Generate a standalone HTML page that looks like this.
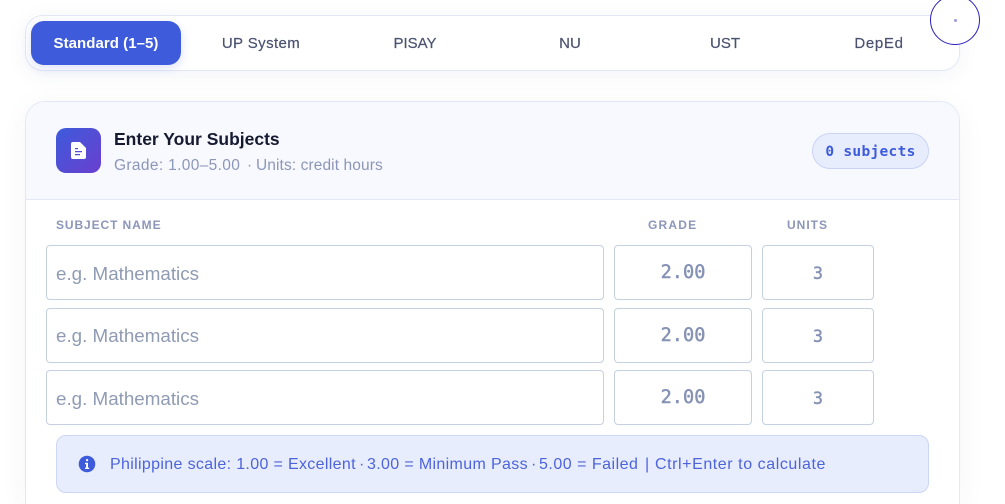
<!DOCTYPE html>
<html><head><meta charset="utf-8"><style>
html,body{margin:0;padding:0;background:#fff;width:1005px;height:504px;overflow:hidden;font-family:"Liberation Sans",sans-serif}
#root{position:relative;width:1005px;height:504px;overflow:hidden;background:#fff}
#clip{position:absolute;left:0;top:0;width:980px;height:504px;overflow:hidden}
.a{position:absolute;white-space:nowrap}
#bar{left:25px;top:15px;width:933px;height:54px;border:1px solid #e4e8f6;border-radius:18px;background:#fff;box-shadow:0 4px 22px rgba(50,60,120,.06)}
#card{left:25px;top:101px;width:933px;height:403px;box-sizing:border-box;width:935px;border:1px solid #e4e8f6;border-bottom:0;border-radius:20px 20px 0 0;background:#fff;box-shadow:0 6px 28px rgba(50,60,120,.05);overflow:hidden}
#act{left:31px;top:21px;width:150px;height:44px;border-radius:13px;background:#3d5bdb;box-shadow:0 3px 10px rgba(61,91,219,.18)}
.t{top:35px;height:18px;line-height:18px;font-size:15px;color:#4a5270;text-align:center;width:150px;-webkit-text-stroke:.2px #4a5270}
#head{left:0;top:0;width:933px;height:97px;background:#f8f9fe;border-bottom:1px solid #e4e8f6}
.lab{top:218px;height:15px;line-height:15px;font-size:12px;font-weight:bold;color:#8c96b8}
.inp{box-sizing:border-box;height:55px;border:1px solid #c5d0e0;border-radius:4px;background:#fff}
.name{left:46px;width:558px;font-size:18.8px;line-height:55px;color:#8f9bb3;padding-left:9px}
.gr{left:614px;width:138px;text-align:center;font-family:"DejaVu Sans Mono","Liberation Mono",monospace;font-size:18.6px;line-height:53px;color:#8592b4;-webkit-text-stroke:.45px #8592b4}
.un{left:762px;width:112px;text-align:center;font-family:"DejaVu Sans Mono","Liberation Mono",monospace;font-size:16.5px;line-height:55px;color:#8592b4;-webkit-text-stroke:.45px #8592b4}
.i{top:456px;height:18px;line-height:18px;font-size:16px;color:#4d63dc}
</style></head><body><div id="root">
<div id="clip">
<div class="a" id="bar"></div>
<div class="a" id="card"><div class="a" id="head"></div></div>
</div>
<div class="a" id="act"></div>
<div class="a t" style="left:31px;color:#fff;font-weight:bold;-webkit-text-stroke:0;letter-spacing:.05px">Standard (1–5)</div>
<div class="a t" style="left:186px;letter-spacing:.4px">UP System</div>
<div class="a t" style="left:340px">PISAY</div>
<div class="a t" style="left:495px">NU</div>
<div class="a t" style="left:650px">UST</div>
<div class="a t" style="left:804px;letter-spacing:.7px">DepEd</div>

<div class="a" style="left:56px;top:128px;width:45px;height:45px;border-radius:10px;background:linear-gradient(135deg,#3d5bdb,#6a3fcf)"></div>
<svg class="a" style="left:71px;top:142px" width="15" height="17" viewBox="0 0 15 17"><path fill="#fff" fill-rule="evenodd" d="M2 0H9L15 6V15A2 2 0 0 1 13 17H2A2 2 0 0 1 0 15V2A2 2 0 0 1 2 0ZM4 6V7.3H7V6ZM4 9V10.3H11V9ZM4 12V13.3H9V12Z"/></svg>
<div class="a" style="left:114px;top:129px;height:21px;line-height:21px;font-size:17.5px;font-weight:bold;color:#161a30">Enter Your Subjects</div>
<div class="a" style="left:114px;top:157px;height:18px;line-height:18px;font-size:15.5px;letter-spacing:.35px;color:#8c96b8">Grade: 1.00–5.00</div>
<div class="a" style="left:247px;top:157px;height:18px;line-height:18px;font-size:15.5px;color:#8c96b8">·</div>
<div class="a" style="left:256px;top:157px;height:18px;line-height:18px;font-size:15.5px;letter-spacing:.1px;color:#8c96b8">Units: credit hours</div>
<div class="a" style="left:812px;top:133px;width:115px;height:34px;border:1px solid #c9d3f5;border-radius:18px;background:#e8edfd;text-align:center;line-height:36px;font-family:'DejaVu Sans Mono','Liberation Mono',monospace;font-weight:bold;font-size:14.5px;letter-spacing:.3px;color:#3d5bdb">0 subjects</div>

<div class="a lab" style="left:56px;letter-spacing:.9px">SUBJECT NAME</div>
<div class="a lab" style="left:648px;letter-spacing:1.2px">GRADE</div>
<div class="a lab" style="left:787px;letter-spacing:1px">UNITS</div>

<div class="a inp name" style="top:245px">e.g. Mathematics</div>
<div class="a inp gr" style="top:245px">2.00</div>
<div class="a inp un" style="top:245px">3</div>
<div class="a inp name" style="top:308px;line-height:54px">e.g. Mathematics</div>
<div class="a inp gr" style="top:308px">2.00</div>
<div class="a inp un" style="top:308px">3</div>
<div class="a inp name" style="top:370px">e.g. Mathematics</div>
<div class="a inp gr" style="top:370px">2.00</div>
<div class="a inp un" style="top:370px">3</div>

<div class="a" style="left:56px;top:435px;width:871px;height:56px;border:1px solid #ccd6f6;border-radius:10px;background:#e8edfd"></div>
<svg class="a" style="left:78px;top:455px" width="18" height="18" viewBox="0 0 18 18"><circle cx="9" cy="9" r="8.3" fill="#3d5bdb"/><rect x="8" y="4" width="2.2" height="2.2" rx="1" fill="#fff"/><path d="M7 7.7H10V12.6H11.2V14H7V12.6H8.1V9.1H7Z" fill="#fff"/></svg>
<div class="a i" style="left:110px;letter-spacing:.34px">Philippine scale: 1.00 = Excellent</div>
<div class="a i" style="left:359px">·</div>
<div class="a i" style="left:367px;letter-spacing:.35px">3.00 = Minimum Pass</div>
<div class="a i" style="left:531px">·</div>
<div class="a i" style="left:539px;letter-spacing:.5px">5.00 = Failed</div>
<div class="a i" style="left:645px">|</div>
<div class="a i" style="left:655px;letter-spacing:.57px">Ctrl+Enter to calculate</div>

<div class="a" style="left:930px;top:-5px;width:50px;height:50px;box-sizing:border-box;border:1.3px solid #2a1fc0;border-radius:50%;background:#fff"></div>
<div class="a" style="left:954px;top:19px;width:3px;height:3px;border-radius:50%;background:#9a9ae0"></div>
</div></body></html>
